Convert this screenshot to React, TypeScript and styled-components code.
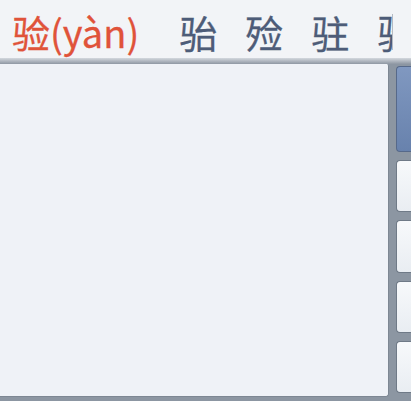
import styled, { createGlobalStyle } from 'styled-components';

const GlobalStyle = createGlobalStyle`
  html, body {
    margin: 0;
    padding: 0;
    background: #f2f4f7;
  }
`;

const Screen = styled.div`
  width: 411px;
  height: 401px;
  overflow: hidden;
  display: flex;
  flex-direction: column;
  background: #8c96a2;
  font-family: 'Noto Sans CJK SC', 'Noto Sans', sans-serif;
`;

const CandidateBar = styled.div`
  height: 58px;
  box-sizing: border-box;
  padding-top: 3px;
  flex: none;
  background: #f2f4f7;
  display: flex;
  align-items: center;
`;

const CandidateStrip = styled.div`
  width: 380px;
  height: 55px;
  padding-left: 12px;
  display: flex;
  align-items: center;
  gap: 28px;
  overflow: hidden;
  font-size: 38px;
  line-height: 56px;
  white-space: nowrap;
`;

const StripEdge = styled.div`
  width: 1px;
  height: 36px;
  margin-top: 2px;
  flex: none;
  background: #b4bac3;
`;

const Candidate = styled.span<{ $active?: boolean }>`
  flex: none;
  padding-top: 2px;
  color: ${(p) => (p.$active ? '#e0533a' : '#4d5c78')};
  margin-right: ${(p) => (p.$active ? '12px' : '0')};
  -webkit-text-stroke: 0.3px currentColor;
`;

const Band = styled.div`
  height: 6px;
  flex: none;
  background: linear-gradient(#d3d8de, #8e97a3);
`;

const Body = styled.div`
  flex: 1;
  display: flex;
  align-items: flex-start;
`;

const Panel = styled.div`
  width: 388px;
  height: 332px;
  background: #eff2f7;
  border-right: 1px solid #7d8793;
  border-bottom: 1px solid #7d8793;
  border-radius: 0 2px 3px 0;
`;

const Side = styled.div`
  margin-left: 7px;
  margin-top: 2px;
  flex: 1;
  display: flex;
  flex-direction: column;
  gap: 8px;
`;

const SideButton = styled.div<{ $primary?: boolean; $h: number }>`
  height: ${(p) => p.$h}px;
  box-sizing: border-box;
  border-radius: 4px 0 0 4px;
  border: 1px solid ${(p) => (p.$primary ? '#56698a' : '#6f7a87')};
  border-right: none;
  background: ${(p) =>
    p.$primary
      ? 'linear-gradient(#8098c0, #6882ad)'
      : 'linear-gradient(#f7f9fb, #e9edf2)'};
`;

const candidates = ['骀', '殓', '驻', '驿'];

export default function App() {
  return (
    <>
      <GlobalStyle />
      <Screen>
        <CandidateBar>
          <CandidateStrip>
            <Candidate $active>验(yàn)</Candidate>
            {candidates.map((c, i) => (
              <Candidate key={i}>{c}</Candidate>
            ))}
          </CandidateStrip>
          <StripEdge />
        </CandidateBar>
        <Band />
        <Body>
          <Panel />
          <Side>
            <SideButton $primary $h={86} />
            <SideButton $h={52} />
            <SideButton $h={53} />
            <SideButton $h={52} />
            <SideButton $h={52} />
          </Side>
        </Body>
      </Screen>
    </>
  );
}
